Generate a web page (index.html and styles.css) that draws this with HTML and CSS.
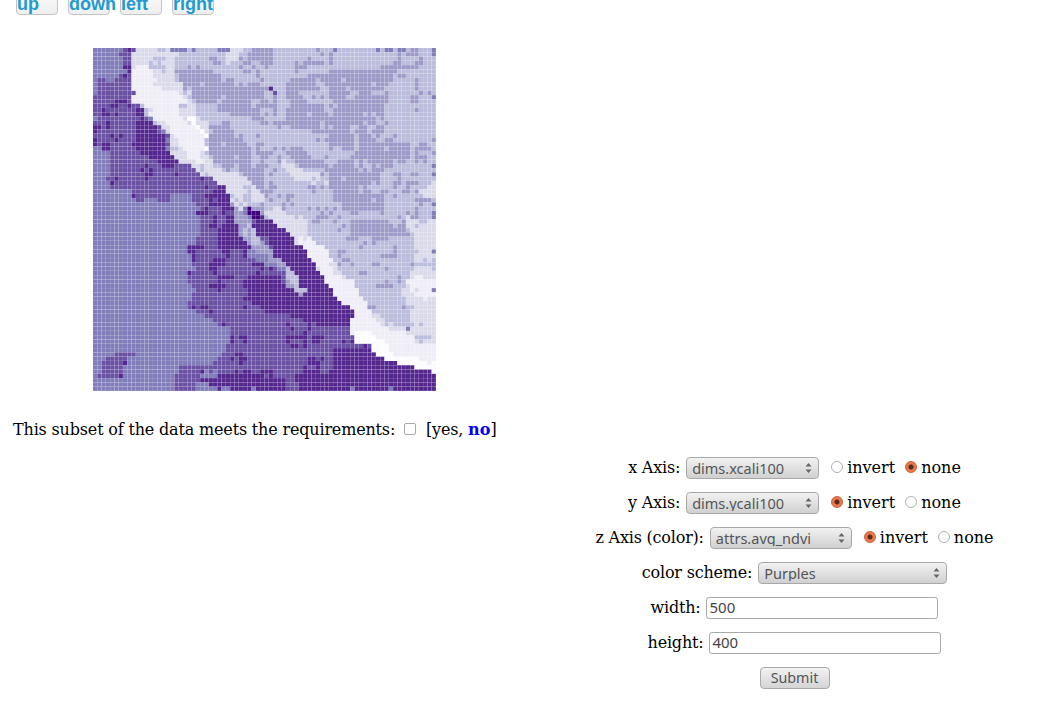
FILE: index.html
```html
<!DOCTYPE html>
<html lang="en">
<head>
    <meta charset="UTF-8">
    <title>Heatmap subset</title>
    <link rel="stylesheet" href="styles.css">
</head>
<body>

    <div class="moves">
        <button class="move">up</button>
        <button class="move">down</button>
        <button class="move">left</button>
        <button class="move">right</button>
    </div>

    <canvas id="heatmap" class="heatmap" width="343" height="343"></canvas>

    <p class="check">
        This subset of the data meets the requirements:
        <input type="checkbox" class="box">
        [yes, <b class="answer">no</b>]
    </p>

    <form class="options">
        <div class="row">
            <label>x Axis:</label>
            <select class="pick pick-axis"><option>dims.xcali100</option></select>
            <span class="choice"><input type="radio" class="dot" name="x">invert</span>
            <span class="choice"><input type="radio" class="dot" name="x" checked>none</span>
        </div>
        <div class="row">
            <label>y Axis:</label>
            <select class="pick pick-axis"><option>dims.ycali100</option></select>
            <span class="choice"><input type="radio" class="dot" name="y" checked>invert</span>
            <span class="choice"><input type="radio" class="dot" name="y">none</span>
        </div>
        <div class="row">
            <label>z Axis (color):</label>
            <select class="pick pick-color"><option>attrs.avg_ndvi</option></select>
            <span class="choice"><input type="radio" class="dot" name="z" checked>invert</span>
            <span class="choice"><input type="radio" class="dot" name="z">none</span>
        </div>
        <div class="row">
            <label>color scheme:</label>
            <select class="pick pick-scheme"><option>Purples</option></select>
        </div>
        <div class="row">
            <label>width:</label>
            <input type="text" class="field" value="500">
        </div>
        <div class="row">
            <label>height:</label>
            <input type="text" class="field" value="400">
        </div>
        <div class="row">
            <button type="button" class="submit">Submit</button>
        </div>
    </form>

    <script src="heatmap.js"></script>

</body>
</html>
```

FILE: styles.css
```css
body {
    font-family: "DejaVu Serif", serif;
    font-size: 16px;
    color: black;
    background: white;
    margin: 0 8px;
}

.moves {
    display: flex;
    gap: 10px;
    margin: -7px 0 0 8px;
}

.move {
    width: 42px;
    height: 22px;
    padding: 0;
    border: 1px solid #c4c4c4;
    border-radius: 4px;
    background: linear-gradient(#fafafa, #eeeeee);
    color: #1f9bcf;
    font-family: "Liberation Sans", Arial, sans-serif;
    font-size: 18px;
    font-weight: bold;
    line-height: 18px;
    text-align: left;
    white-space: nowrap;
    overflow: visible;
}

.heatmap {
    display: block;
    margin: 33px 0 0 85px;
}

.check {
    margin: 29px 0 0 5px;
    line-height: 20px;
    letter-spacing: -0.17px;
}

.box {
    appearance: none;
    width: 12px;
    height: 12px;
    margin: 0 5px 0 4px;
    border: 1px solid #aaa;
    border-radius: 2px;
    background: white;
}

.answer {
    color: #0000ff;
    letter-spacing: 0;
}

.options {
    width: 479px;
    margin: 17px 0 0 auto;
}

.row {
    display: flex;
    justify-content: center;
    align-items: center;
    height: 22px;
    margin-bottom: 13px;
}

.row label {
    margin-right: 6px;
    padding-bottom: 2px;
    letter-spacing: -0.2px;
}

.pick {
    appearance: none;
    height: 22px;
    padding: 0 5px 2px;
    border: 1px solid #a8a8a8;
    border-radius: 4px;
    background: url("data:image/svg+xml,%3Csvg xmlns='http://www.w3.org/2000/svg' width='7' height='12'%3E%3Cpath d='M3.5 1 6.5 4.5H.5zM3.5 11 .5 7.5h6z' fill='%23666'/%3E%3C/svg%3E") no-repeat right 6px center / 7px 12px,
        linear-gradient(#f2f2f2, #d0d0d0);
    color: #555;
    font-family: "Noto Sans", sans-serif;
    font-size: 14.5px;
}

.pick-axis {
    width: 133px;
}

.pick-color {
    width: 142px;
}

.pick-scheme {
    width: 189px;
}

.choice {
    display: flex;
    align-items: center;
    margin-left: 10px;
    padding-bottom: 2px;
}

.choice + .choice {
    margin-left: 8px;
}

.dot {
    appearance: none;
    width: 12px;
    height: 12px;
    margin: 0 4px 1px 2px;
    border: 1px solid #b0b0b0;
    border-radius: 50%;
    background: white;
}

.dot:checked {
    border-color: #c8603a;
    background: radial-gradient(circle, #5a2c1c 0 2px, #e8784c 3px);
}

.field {
    width: 232px;
    height: 22px;
    box-sizing: border-box;
    padding: 0 2px 2px;
    border: 1px solid #aaa;
    border-radius: 3px;
    color: #444;
    font-family: "Noto Sans", sans-serif;
    font-size: 15px;
}

.submit {
    width: 70px;
    height: 22px;
    padding: 0 0 2px;
    border: 1px solid #a8a8a8;
    border-radius: 4px;
    background: linear-gradient(#f2f2f2, #d4d4d4);
    color: #555;
    font-family: "Noto Sans", sans-serif;
    font-size: 14.3px;
}
```

FILE: heatmap.js
```js
// Purples scale, darkest first
const colors = ['#3f007d', '#54278f', '#6a51a3', '#807dba', '#9e9ac8', '#bcbddc', '#dadaeb', '#efedf5', '#fcfbfd'];

const originX = 93;
const originY = 48;
const cells = 80;
const size = 343 / cells;

// painted in order, points are page coordinates
const regions = [
    // lower left
    [3, [[93, 48], [137, 48], [136, 100], [233, 218], [350, 391], [93, 391]]],
    [2, [[122, 48], [138, 48], [136, 100], [180, 163], [210, 177], [233, 218], [270, 218], [353, 330], [437, 377], [437, 391], [170, 391], [180, 367], [213, 363], [227, 347], [230, 327], [187, 307], [197, 290], [187, 280], [197, 263], [187, 250], [197, 227], [195, 218], [190, 195], [150, 200], [135, 205], [130, 190], [113, 188], [108, 175], [115, 165], [110, 150], [93, 148], [93, 78], [110, 78], [126, 72], [122, 60]]],
    [2, [[107, 360], [125, 353], [137, 355], [130, 366], [113, 374], [100, 378], [95, 372]]],
    [3, [[203, 372], [218, 370], [222, 391], [200, 391]]],
    [1, [[135, 128], [150, 125], [162, 142], [181, 164], [176, 170], [158, 158], [140, 158], [133, 145]]],
    [1, [[213, 178], [228, 190], [238, 218], [222, 216]]],
    [1, [[222, 220], [250, 222], [268, 250], [260, 262], [240, 244], [228, 250], [224, 268], [210, 275], [208, 262], [222, 255], [216, 232]]],
    [1, [[243, 200], [258, 200], [270, 218], [303, 250], [323, 277], [351, 310], [352, 326], [330, 322], [310, 322], [270, 314], [247, 300], [243, 285], [222, 278], [212, 270], [240, 282], [262, 272], [285, 285], [300, 300]]],
    [1, [[333, 350], [355, 345], [373, 352], [407, 365], [437, 377], [437, 391], [300, 391], [298, 375], [333, 372]]],
    [1, [[200, 378], [240, 372], [290, 382], [290, 391], [215, 391]]],
    [0, [[245, 201], [252, 201], [262, 214], [248, 214]]],
    // streaks through the dark band
    [4, [[228, 205], [240, 212], [262, 240], [286, 272], [304, 296], [302, 300], [290, 290], [272, 266], [252, 244], [234, 226]]],
    [5, [[278, 262], [287, 274], [304, 295], [303, 300], [296, 294], [282, 276]]],
    [6, [[299, 292], [304, 294], [304, 300], [300, 298]]],
    [3, [[245, 245], [258, 250], [280, 268], [282, 276], [258, 262]]],
    // upper right
    [5, [[177, 48], [437, 48], [437, 320], [395, 335], [340, 280], [270, 218], [243, 200], [195, 150], [170, 90]]],
    [4, [[247, 48], [275, 48], [272, 62], [248, 62]]],
    [4, [[175, 72], [205, 66], [232, 78], [246, 85], [270, 82], [278, 102], [275, 125], [262, 128], [245, 115], [240, 122], [210, 108], [198, 104], [186, 88]]],
    [4, [[207, 128], [230, 122], [250, 145], [252, 172], [230, 172], [210, 150]]],
    [4, [[288, 85], [310, 75], [340, 70], [376, 66], [396, 60], [397, 76], [380, 90], [385, 112], [375, 126], [386, 136], [365, 136], [387, 152], [376, 166], [354, 150], [320, 136], [306, 128], [290, 116]]],
    [4, [[287, 110], [308, 110], [310, 128], [292, 130]]],
    [4, [[240, 168], [270, 170], [274, 194], [250, 196]]],
    [4, [[323, 170], [352, 155], [372, 145], [410, 142], [412, 158], [380, 168], [385, 212], [350, 216], [330, 200]]],
    [4, [[283, 150], [305, 146], [330, 170], [300, 168]]],
    [4, [[347, 224], [437, 222], [437, 238], [395, 236], [370, 245], [350, 240]]],
    [6, [[223, 48], [240, 48], [240, 65], [228, 62]]],
    [6, [[420, 186], [437, 182], [437, 198], [424, 198]]],
    [6, [[274, 158], [284, 162], [325, 178], [322, 186], [296, 178]]],
    [6, [[407, 220], [437, 220], [437, 338], [410, 335], [404, 292], [420, 262], [410, 240]]],
    // ridge
    [6, [[137, 48], [180, 48], [176, 62], [175, 78], [192, 95], [205, 122], [204, 152], [227, 182], [247, 198], [258, 200], [270, 218], [303, 250], [323, 277], [350, 310], [353, 337], [373, 350], [437, 377], [437, 338], [410, 334], [387, 320], [360, 303], [347, 280], [310, 240], [306, 222], [270, 205], [245, 180], [208, 162], [195, 150], [170, 100], [135, 100]]],
    [6, [[136, 100], [160, 130], [180, 163], [210, 177], [226, 190], [234, 210], [240, 214], [246, 200], [232, 182], [204, 152], [180, 110]]],
    [7, [[135, 70], [155, 72], [160, 85], [150, 88], [165, 92], [190, 100], [175, 108], [195, 130], [205, 150], [200, 155], [172, 116], [150, 110], [135, 100]]],
    [7, [[146, 112], [172, 116], [200, 155], [204, 164], [196, 164], [165, 130]]],
    [7, [[300, 235], [317, 243], [327, 252], [332, 270], [350, 285], [366, 305], [376, 320], [396, 330], [420, 345], [437, 345], [437, 377], [373, 350], [353, 337], [350, 310], [323, 277], [305, 252]]],
    [7, [[405, 278], [437, 277], [437, 298], [420, 300]]],
    [8, [[355, 326], [366, 332], [395, 352], [437, 368], [437, 377], [407, 364], [373, 351], [353, 337]]],
    [8, [[192, 118], [196, 120], [208, 150], [204, 150]]],
    // dark spot
    [2, [[266, 86], [272, 86], [276, 94], [270, 96]]],
];

function inside(px, py, points) {
    let hit = false;
    for (let i = 0, j = points.length - 1; i < points.length; j = i++) {
        const [xa, ya] = points[i];
        const [xb, yb] = points[j];
        if ((ya > py) !== (yb > py) && px < (xb - xa) * (py - ya) / (yb - ya) + xa) {
            hit = !hit;
        }
    }
    return hit;
}

function noise(a, b) {
    const v = Math.sin(a * 127.1 + b * 311.7) * 43758.5453;
    return v - Math.floor(v);
}

// smooth noise, used to wobble the region outlines
function wobble(x, y) {
    const ix = Math.floor(x);
    const iy = Math.floor(y);
    const fx = x - ix;
    const fy = y - iy;
    const top = noise(ix, iy) * (1 - fx) + noise(ix + 1, iy) * fx;
    const bottom = noise(ix, iy + 1) * (1 - fx) + noise(ix + 1, iy + 1) * fx;
    return top * (1 - fy) + bottom * fy - 0.5;
}

function levelAt(px, py) {
    let level = 3;
    regions.forEach(([value, points]) => {
        if (inside(px, py, points)) {
            level = value;
        }
    });
    return level;
}

const ctx = document.getElementById('heatmap').getContext('2d');

for (let row = 0; row < cells; row++) {
    for (let col = 0; col < cells; col++) {
        const dx = wobble(col / 4, row / 4) * 10 + (noise(col, row) - 0.5) * 3.5;
        const dy = wobble(col / 4 + 40, row / 4 + 9) * 10 + (noise(row + 31, col + 7) - 0.5) * 3.5;
        const px = originX + (col + 0.5) * size + dx;
        const py = originY + (row + 0.5) * size + dy;
        let level = levelAt(px, py);
        // stray cells come in small clumps, only in some parts of the map
        const clump = wobble(col / 2.5 + 70, row / 2.5 + 20);
        if (clump > 0.12 && noise(col + 13, row + 57) < 0.45) {
            if (level === 5) {
                level = 4;
            } else if (level === 4 || level === 6) {
                level = 5;
            } else if (level === 2) {
                level = 1;
            }
        }
        ctx.fillStyle = colors[level];
        // the small gap leaves the pale grid lines between the cells
        ctx.fillRect(col * size, row * size, size - 0.12, size - 0.12);
    }
}
```
